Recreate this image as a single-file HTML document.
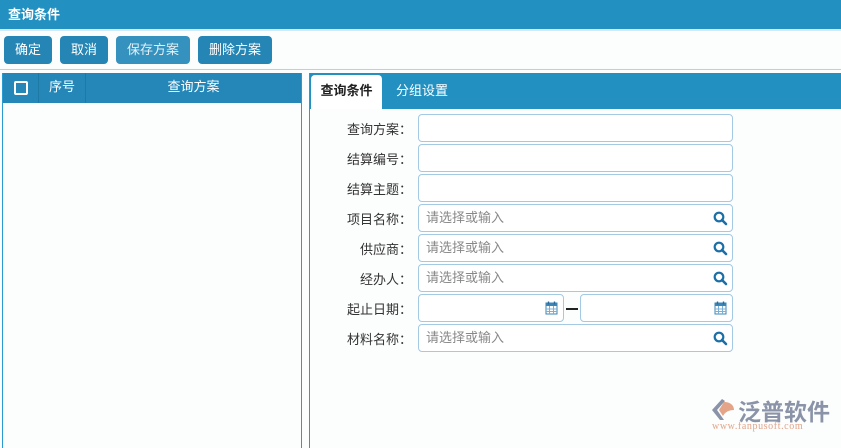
<!DOCTYPE html>
<html><head><meta charset="utf-8"><style>
*{box-sizing:border-box;margin:0;padding:0}
body{width:841px;height:443px;overflow:hidden;background:#fcfdfd;font-family:"Liberation Sans","Noto Sans CJK SC",sans-serif;font-size:13px;color:#222;position:relative}
.top{position:absolute;left:0;top:0;width:841px;height:29px;background:#2291c1;color:#fff;font-weight:bold;padding:4px 0 0 8px;font-size:13px}
.top2{position:absolute;left:0;top:29px;width:841px;height:2px;background:#d6e8f0}
.btn{position:absolute;top:36px;height:28px;background:#2585b4;color:#fff;border-radius:4px;font-size:13px;line-height:27px;text-align:center}
.sep{position:absolute;left:0;top:69px;width:841px;height:1px;background:#b8d3df}
.lp{position:absolute;left:2px;top:73px;width:300px;height:375px;border-left:1px solid #2a9ad0;border-right:1px solid #2a9ad0}
.lh{position:absolute;left:0;top:0;width:298px;height:30px;background:#2487b8;color:#fff}
.lh div{position:absolute;top:0;height:30px;line-height:28px;text-align:center;border-right:1px solid #1e79a6}
.rp{position:absolute;left:309px;top:73px;width:540px;height:375px;border-left:1px solid #2a9ad0}
.tabbar{position:absolute;left:0;top:0;width:540px;height:36px;background:#2291c1}
.tab{position:absolute;top:2px;height:34px;line-height:32px;font-size:13px}
.lbl{position:absolute;left:326px;width:86px;text-align:right;font-size:13px;color:#333}
.in{position:absolute;left:418px;width:315px;height:28px;border:1px solid #a3c9e3;border-radius:4px;background:#fff;color:#888;font-size:13px;line-height:26px;padding-left:7px}
.q{position:absolute;right:4px;top:6px}
</style></head><body>
<div class="top">查询条件</div><div class="top2"></div>
<div class="btn" style="left:4px;width:48px">确定</div>
<div class="btn" style="left:60px;width:48px">取消</div>
<div class="btn" style="left:116px;width:74px;background:#3592bf;color:#e4f0f6">保存方案</div>
<div class="btn" style="left:198px;width:74px">删除方案</div>
<div class="sep"></div>
<div class="lp"><div class="lh">
<div style="left:0;width:36px"><span style="display:inline-block;width:14px;height:14px;border:2px solid #fff;border-radius:2px;margin-top:8px"></span></div>
<div style="left:36px;width:47px">序号</div>
<div style="left:83px;width:215px;border-right:none">查询方案</div>
</div></div>
<div class="rp"><div class="tabbar">
<div class="tab" style="left:1px;width:71px;background:#fff;border-radius:4px 4px 0 0;text-align:center;font-weight:bold;color:#222">查询条件</div>
<div class="tab" style="left:86px;color:#fff">分组设置</div>
</div></div>
<div class="lbl" style="top:119px">查询方案：</div><div class="in" style="top:114px"></div>
<div class="lbl" style="top:149px">结算编号：</div><div class="in" style="top:144px"></div>
<div class="lbl" style="top:179px">结算主题：</div><div class="in" style="top:174px"></div>
<div class="lbl" style="top:209px">项目名称：</div><div class="in" style="top:204px">请选择或输入<svg class="q" width="15" height="15" viewBox="0 0 15 15"><circle cx="6" cy="6" r="4.3" fill="none" stroke="#1a6fa8" stroke-width="2.2"/><path d="M9 9l4 4" stroke="#1a6fa8" stroke-width="2.6" stroke-linecap="round"/></svg></div>
<div class="lbl" style="top:239px">供应商：</div><div class="in" style="top:234px">请选择或输入<svg class="q" width="15" height="15" viewBox="0 0 15 15"><circle cx="6" cy="6" r="4.3" fill="none" stroke="#1a6fa8" stroke-width="2.2"/><path d="M9 9l4 4" stroke="#1a6fa8" stroke-width="2.6" stroke-linecap="round"/></svg></div>
<div class="lbl" style="top:269px">经办人：</div><div class="in" style="top:264px">请选择或输入<svg class="q" width="15" height="15" viewBox="0 0 15 15"><circle cx="6" cy="6" r="4.3" fill="none" stroke="#1a6fa8" stroke-width="2.2"/><path d="M9 9l4 4" stroke="#1a6fa8" stroke-width="2.6" stroke-linecap="round"/></svg></div>
<div class="lbl" style="top:299px">起止日期：</div>
<div class="in" style="top:294px;width:146px"><svg class="q" width="13" height="14" viewBox="0 0 13 14" style="top:6px;right:5px"><rect x="1" y="2" width="11" height="11" fill="#fff" stroke="#3a86b8"/><rect x="1" y="2" width="11" height="3" fill="#3a86b8"/><path d="M4.5 5v8M8.5 5v8M1 8h11M1 10.5h11" stroke="#7ab0d4"/><path d="M3.5 0.5v3M9.5 0.5v3" stroke="#2a6a98" stroke-width="1.4"/></svg></div>
<div style="position:absolute;left:566px;top:308px;width:12px;height:1.5px;background:#222"></div>
<div class="in" style="top:294px;left:580px;width:153px"><svg class="q" width="13" height="14" viewBox="0 0 13 14" style="top:6px;right:5px"><rect x="1" y="2" width="11" height="11" fill="#fff" stroke="#3a86b8"/><rect x="1" y="2" width="11" height="3" fill="#3a86b8"/><path d="M4.5 5v8M8.5 5v8M1 8h11M1 10.5h11" stroke="#7ab0d4"/><path d="M3.5 0.5v3M9.5 0.5v3" stroke="#2a6a98" stroke-width="1.4"/></svg></div>
<div class="lbl" style="top:329px">材料名称：</div><div class="in" style="top:324px">请选择或输入<svg class="q" width="15" height="15" viewBox="0 0 15 15"><circle cx="6" cy="6" r="4.3" fill="none" stroke="#1a6fa8" stroke-width="2.2"/><path d="M9 9l4 4" stroke="#1a6fa8" stroke-width="2.6" stroke-linecap="round"/></svg></div>
<svg style="position:absolute;left:710px;top:398px" width="30" height="24" viewBox="0 0 30 24"><path d="M12 1L2 12l8 10h4L7 12 15 3z" fill="#8a93a8"/><path d="M14 4c6 0 10 3 10 8-5 0-9 2-11 6L9 12z" fill="#e3a488"/></svg>
<div style="position:absolute;left:738px;top:393px;font-size:23px;color:#8a93a8;letter-spacing:0px;font-weight:bold">泛普软件</div>
<div style="position:absolute;left:712px;top:421px;font-size:10px;color:#e3a488;font-family:'Liberation Serif',serif;letter-spacing:0.6px">www.fanpusoft.com</div>
</body></html>
